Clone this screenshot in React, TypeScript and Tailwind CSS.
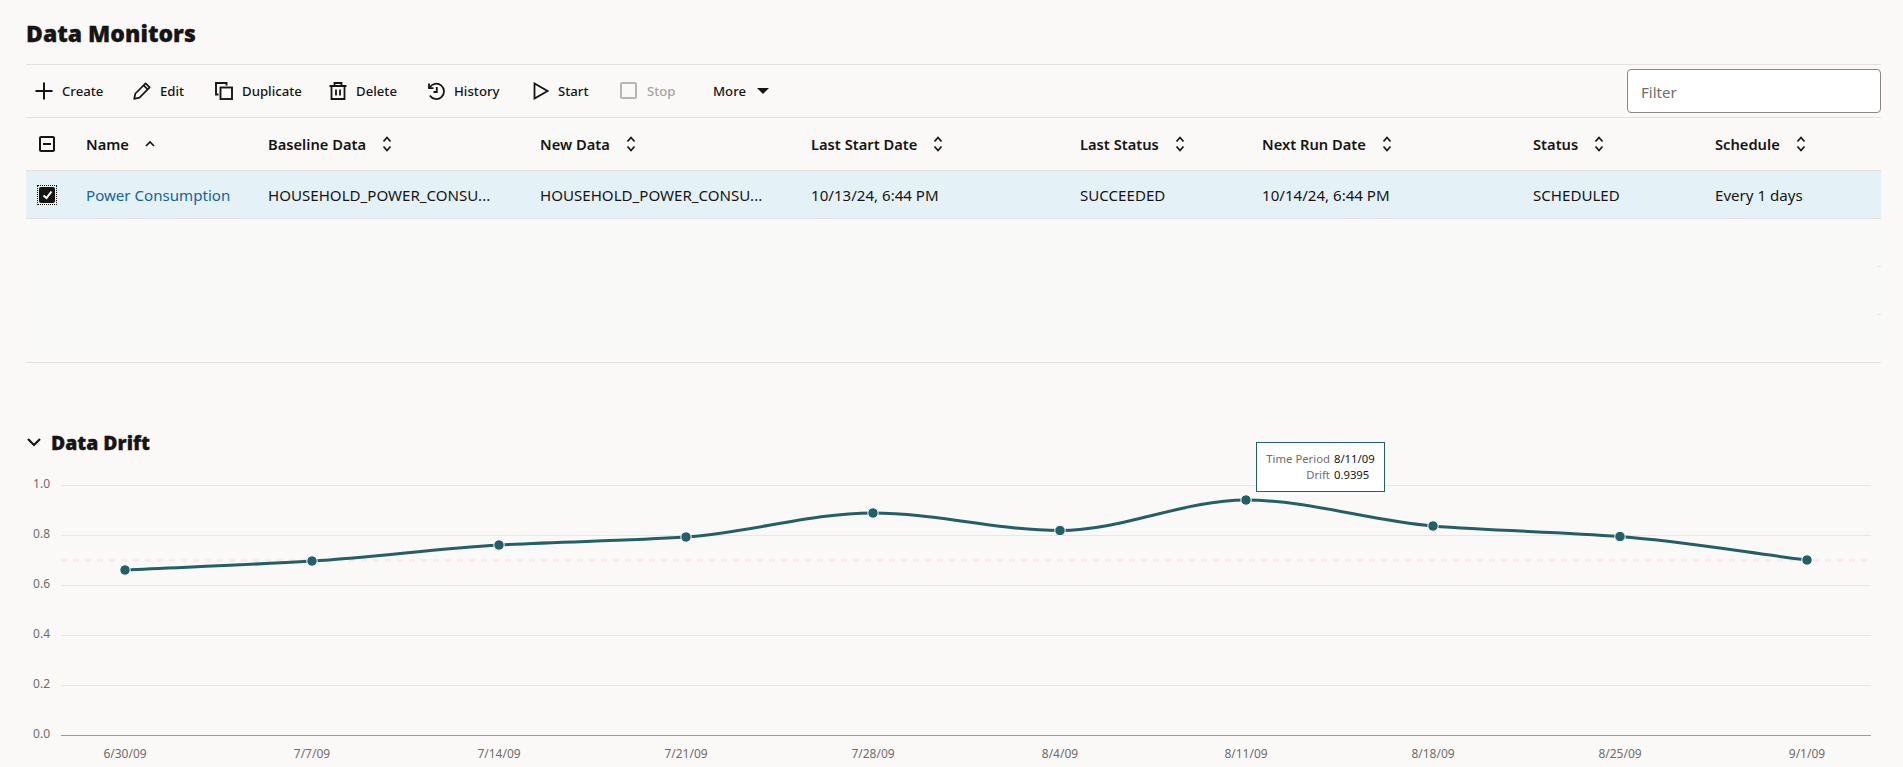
const font = '"Noto Sans", "Open Sans", sans-serif'

const points: [number, number, string][] = [
  [125, 570, '6/30/09'],
  [312, 561, '7/7/09'],
  [499, 545, '7/14/09'],
  [686, 537, '7/21/09'],
  [873, 513, '7/28/09'],
  [1060, 530.5, '8/4/09'],
  [1246, 500, '8/11/09'],
  [1433, 526, '8/18/09'],
  [1620, 536.5, '8/25/09'],
  [1807, 560, '9/1/09'],
]

// monotone style curve, flat at the peaks
function curvePath() {
  const slopes = points.map((p, i) => {
    if (i === 0) return (points[1][1] - p[1]) / (points[1][0] - p[0])
    if (i === points.length - 1) return (p[1] - points[i - 1][1]) / (p[0] - points[i - 1][0])
    const a = (p[1] - points[i - 1][1]) / (p[0] - points[i - 1][0])
    const b = (points[i + 1][1] - p[1]) / (points[i + 1][0] - p[0])
    if (a * b <= 0) return 0
    return (2 * a * b) / (a + b)
  })
  let d = `M${points[0][0]} ${points[0][1]}`
  for (let i = 1; i < points.length; i++) {
    const [x0, y0] = points[i - 1]
    const [x1, y1] = points[i]
    const h = (x1 - x0) / 3
    d += ` C${x0 + h} ${y0 + slopes[i - 1] * h} ${x1 - h} ${y1 - slopes[i] * h} ${x1} ${y1}`
  }
  return d
}

function PlusIcon() {
  return (
    <svg width="18" height="18" viewBox="0 0 18 18" fill="none" stroke="#161513" strokeWidth="2">
      <path d="M9 0.5v17M0.5 9h17" />
    </svg>
  )
}
function EditIcon() {
  return (
    <svg width="18" height="18" viewBox="0 0 18 18" fill="none" stroke="#161513" strokeWidth="1.7" strokeLinejoin="round">
      <path d="M1.2 16.8l1.2-5.3L12.6 1.3l4.1 4.1L6.5 15.6z" />
      <path d="M10.6 3.3l4.1 4.1" />
    </svg>
  )
}
function DuplicateIcon() {
  return (
    <svg width="18" height="18" viewBox="0 0 18 18" fill="none" stroke="#161513" strokeWidth="1.9">
      <path d="M3.5 12.5H1V1h10.5v2.5" />
      <rect x="5.5" y="5.5" width="11.5" height="11.5" />
    </svg>
  )
}
function DeleteIcon() {
  return (
    <svg width="18" height="18" viewBox="0 0 18 18" fill="none" stroke="#161513" strokeWidth="1.8">
      <path d="M0.5 4h17M5.5 4V1h7v3M2.5 4v13h13V4M7 7.5v6M11 7.5v6" />
    </svg>
  )
}
function HistoryIcon() {
  return (
    <svg width="18" height="18" viewBox="0 0 18 18" fill="none" stroke="#161513" strokeWidth="1.8">
      <path d="M2.6 5.5A7.7 7.7 0 1 1 2.8 13.5" />
      <path d="M2 1.5V6.2H6.5" />
      <path d="M9.8 5v5H6.5" />
    </svg>
  )
}
function StartIcon() {
  return (
    <svg width="16" height="18" viewBox="0 0 16 18" fill="none" stroke="#161513" strokeWidth="1.8" strokeLinejoin="miter">
      <path d="M1.5 1.5v15l13-7.5z" />
    </svg>
  )
}
function StopIcon() {
  return (
    <svg width="18" height="18" viewBox="0 0 18 18" fill="none" stroke="#b9b6b2" strokeWidth="2">
      <rect x="1" y="1" width="15" height="15" rx="1" />
    </svg>
  )
}
function SortIcon() {
  return (
    <svg width="12" height="16" viewBox="0 0 12 16" fill="none" stroke="#161513" strokeWidth="1.7">
      <path d="M2.5 5.5l3.5-4 3.5 4M2.5 10.5l3.5 4 3.5-4" />
    </svg>
  )
}

const tools = [
  { label: 'Create', icon: <PlusIcon />, w: 'w-[98px]' },
  { label: 'Edit', icon: <EditIcon />, w: 'w-[82px]' },
  { label: 'Duplicate', icon: <DuplicateIcon />, w: 'w-[114px]' },
  { label: 'Delete', icon: <DeleteIcon />, w: 'w-[98px]' },
  { label: 'History', icon: <HistoryIcon />, w: 'w-[106px]' },
  { label: 'Start', icon: <StartIcon />, w: 'w-[87px]' },
]

const columns = [
  { label: 'Name', value: 'Power Consumption' },
  { label: 'Baseline Data', value: 'HOUSEHOLD_POWER_CONSU...' },
  { label: 'New Data', value: 'HOUSEHOLD_POWER_CONSU...' },
  { label: 'Last Start Date', value: '10/13/24, 6:44 PM' },
  { label: 'Last Status', value: 'SUCCEEDED' },
  { label: 'Next Run Date', value: '10/14/24, 6:44 PM' },
  { label: 'Status', value: 'SCHEDULED' },
  { label: 'Schedule', value: 'Every 1 days' },
]

const gridCols = 'grid grid-cols-[60px_182px_272px_271px_269px_182px_271px_182px_1fr]'

export default function App() {
  return (
    <div className="h-[767px] w-[1903px] overflow-hidden bg-[#fbf9f8] text-[#161513]" style={{ fontFamily: font }}>
      <div className="pl-[26px] pr-[22px]">
        <h1 className="flex h-[64px] items-center pt-[3px] text-[23px] font-black [-webkit-text-stroke:0.3px_#161513]">
          Data Monitors
        </h1>

        <div className="flex h-[54px] items-center justify-between border-y border-[#e4e1dd]">
          <div className="flex items-center pl-[9px] text-[13.2px] font-medium">
            {tools.map((t) => (
              <div key={t.label} className={`flex items-center gap-[9px] ${t.w}`}>
                {t.icon}
                <span className="pt-[1px]">{t.label}</span>
              </div>
            ))}
            <div className="flex w-[93px] items-center gap-[9px] text-[#a5a29e]">
              <StopIcon />
              <span className="pt-[1px]">Stop</span>
            </div>
            <span className="pt-[1px]">More</span>
            <span className="ml-[11px] h-0 w-0 border-x-[6px] border-t-[6px] border-x-transparent border-t-[#161513]" />
          </div>
          <div className="flex h-[44px] w-[254px] items-center rounded-[4px] border border-[#8a8682] bg-white px-[13px] pt-[2px] text-[15px] text-[#6f6c69]">
            Filter
          </div>
        </div>

        <div className={`${gridCols} h-[53px] items-center border-b border-[#e4e1dd] text-[14.7px] font-semibold`}>
          <div className="pl-[13px]">
            <span className="flex h-[16px] w-[16px] items-center justify-center rounded-[2px] border-2 border-[#161513]">
              <span className="h-[2px] w-[8px] bg-[#161513]" />
            </span>
          </div>
          {columns.map((c, i) => (
            <div key={c.label} className="flex items-center gap-[15px]">
              <span>{c.label}</span>
              {i === 0 ? (
                <svg width="12" height="8" viewBox="0 0 12 8" fill="none" stroke="#161513" strokeWidth="1.7">
                  <path d="M2 6l4-4 4 4" />
                </svg>
              ) : (
                <SortIcon />
              )}
            </div>
          ))}
        </div>

        <div className={`${gridCols} h-[48px] items-center border-b border-[#e4e1dd] bg-[#e4f1f7] text-[15.1px]`}>
          <div className="pl-[11px]">
            <span className="flex h-[20px] w-[20px] items-center justify-center border border-dotted border-[#161513]">
              <span className="flex h-[16px] w-[16px] items-center justify-center rounded-[2px] bg-[#161513]">
                <svg width="11" height="10" viewBox="0 0 11 10" fill="none" stroke="white" strokeWidth="2">
                  <path d="M1.5 5.5l3 2.5 5-6.5" />
                </svg>
              </span>
            </span>
          </div>
          {columns.map((c, i) => (
            <div key={c.label} className={i === 0 ? 'pt-[2px] text-[#14659a]' : 'pt-[2px]'}>
              {c.value}
            </div>
          ))}
        </div>

        <div className="flex h-[144px] flex-col items-end gap-[47px] border-b border-[#e4e1dd] bg-[#f9f9f8] pt-[47px]">
          <div className="h-px w-[4px] bg-[#e4e1dd]" />
          <div className="h-px w-[4px] bg-[#e4e1dd]" />
        </div>
      </div>

      <div className="flex h-[107px] items-end pb-[13px] pl-[27px]">
        <svg width="14" height="10" viewBox="0 0 14 10" fill="none" stroke="#161513" strokeWidth="2.2" className="mb-[10px]">
          <path d="M1 2l6 6 6-6" />
        </svg>
        <h2 className="ml-[10px] text-[19.4px] font-black [-webkit-text-stroke:0.3px_#161513]">Data Drift</h2>
      </div>

      <div className="relative">
        <svg width="1903" height="297" viewBox="0 470 1903 297" className="block">
          {[485, 535, 585, 635, 685].map((y) => (
            <line key={y} x1="61" x2="1871" y1={y + 0.5} y2={y + 0.5} stroke="#e9e7e4" />
          ))}
          <line x1="61" x2="1871" y1="735.5" y2="735.5" stroke="#9e9a96" />
          <line x1="61" x2="1867" y1="560.5" y2="560.5" stroke="#fce8e6" strokeWidth="2.5" strokeDasharray="6 6" />
          {['1.0', '0.8', '0.6', '0.4', '0.2', '0.0'].map((v, i) => (
            <text key={v} x="50" y={488 + i * 50} textAnchor="end" fontSize="12" fill="#6f6c69">
              {v}
            </text>
          ))}
          <path d={curvePath()} fill="none" stroke="#225f66" strokeWidth="3" />
          {points.map(([x, y, label]) => (
            <g key={label}>
              <circle cx={x} cy={y} r="5.2" fill="#225f66" stroke="#fbf9f8" strokeWidth="1" />
              <text x={x} y="758" textAnchor="middle" fontSize="12" fill="#6f6c69">
                {label}
              </text>
            </g>
          ))}
        </svg>
        <div className="absolute left-[1256px] top-[-28px] grid h-[50px] w-[129px] grid-cols-[auto_auto] content-center justify-center gap-x-[4px] border border-[#225f66] bg-white text-[11.3px] leading-[16.5px]">
          <span className="text-right text-[#6f6c69]">Time Period</span>
          <span>8/11/09</span>
          <span className="text-right text-[#6f6c69]">Drift</span>
          <span>0.9395</span>
        </div>
      </div>
    </div>
  )
}
